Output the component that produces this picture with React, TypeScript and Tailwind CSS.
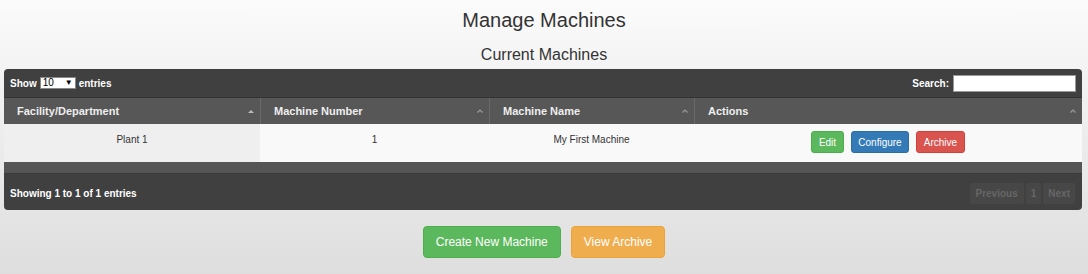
// Manage Machines page: datatable with actions + footer buttons

const FONT = { fontFamily: '"Liberation Sans", Arial, sans-serif' };

type Machine = { facility: string; number: string; name: string };

const MACHINES: Machine[] = [{ facility: "Plant 1", number: "1", name: "My First Machine" }];

function SortIcon({ active = false }: { active?: boolean }) {
  return active ? (
    <svg width="6" height="4" viewBox="0 0 6 4" className="shrink-0">
      <path d="M0 4 L3 1 L6 4 Z" fill="#bbbbbb" />
    </svg>
  ) : (
    <svg width="6" height="4" viewBox="0 0 6 4" className="shrink-0">
      <path d="M0.5 3.5 L3 1 L5.5 3.5" fill="none" stroke="#9a9a9a" strokeWidth="1.2" />
    </svg>
  );
}

function HeaderCell({ label, active, className }: { label: string; active?: boolean; className: string }) {
  return (
    <div className={`flex items-center justify-between pl-[13px] pr-[6px] ${className}`}>
      <span className="text-[11px] font-bold text-[#eeeeee]">{label}</span>
      <SortIcon active={active} />
    </div>
  );
}

export default function App() {
  return (
    <div
      className="w-[1088px] h-[274px] bg-gradient-to-b from-[#fbfbfb] to-[#dedede] flex flex-col items-center text-[#333]"
      style={FONT}
    >
      <h1 className="mt-[7px] text-[20px] leading-[26px] text-[#333]">Manage Machines</h1>
      <h2 className="mt-[12px] text-[16px] leading-[20px] text-[#333]">Current Machines</h2>

      {/* Table panel */}
      <div className="mt-[4px] w-[1078px] self-start ml-[4px] rounded-[4px] bg-[#404040] overflow-hidden">
        {/* Top controls */}
        <div className="h-[29px] flex items-center justify-between pl-[6px] pr-[6px] border-b border-[#333]">
          <div className="flex items-center gap-[3px] text-[10px] font-bold text-white">
            <span>Show</span>
            <div className="w-[36px] h-[12px] bg-white border border-[#888] flex items-center justify-between px-[2px] text-black font-normal text-[10px] leading-none">
              <span>10</span>
              <span className="text-[8px]">▼</span>
            </div>
            <span>entries</span>
          </div>
          <div className="flex items-center gap-[4px] text-[10px] font-bold text-white">
            <span>Search:</span>
            <div className="w-[123px] h-[17px] bg-white border border-[#999]" />
          </div>
        </div>

        {/* Header */}
        <div className="flex h-[26px] bg-[#575757]">
          <HeaderCell label="Facility/Department" active className="w-[256px]" />
          <HeaderCell label="Machine Number" className="w-[229px] border-l border-[#6a6a6a]" />
          <HeaderCell label="Machine Name" className="w-[205px] border-l border-[#6a6a6a]" />
          <HeaderCell label="Actions" className="flex-1 border-l border-[#6a6a6a]" />
        </div>

        {/* Rows */}
        {MACHINES.map((m) => (
          <div key={m.number} className="flex h-[38px] text-[10px] text-[#333]">
            <div className="w-[256px] bg-[#efefef] flex items-center justify-center pb-[8px]">{m.facility}</div>
            <div className="w-[229px] bg-[#f9f9f9] flex items-center justify-center pb-[8px]">{m.number}</div>
            <div className="w-[205px] bg-[#f9f9f9] flex items-center justify-center pb-[8px]">{m.name}</div>
            <div className="flex-1 bg-[#f9f9f9] flex items-center justify-center gap-[7px] pb-[2px]">
              <button className="h-[22px] w-[33px] rounded-[3px] bg-[#5cb85c] border border-[#4cae4c] text-white text-[10px]">
                Edit
              </button>
              <button className="h-[22px] w-[58px] rounded-[3px] bg-[#337ab7] border border-[#2e6da4] text-white text-[10px]">
                Configure
              </button>
              <button className="h-[22px] w-[49px] rounded-[3px] bg-[#d9534f] border border-[#d43f3a] text-white text-[10px]">
                Archive
              </button>
            </div>
          </div>
        ))}

        <div className="h-[12px] bg-[#555] border-b border-[#3a3a3a]" />

        {/* Footer */}
        <div className="h-[36px] flex items-center justify-between pl-[6px] pr-[7px] pt-[2px]">
          <span className="text-[10px] font-bold text-white">Showing 1 to 1 of 1 entries</span>
          <div className="flex items-center gap-[2px] text-[10px] font-bold text-[#666]">
            <span className="h-[21px] px-[6px] flex items-center bg-[#474747] rounded-[2px]">Previous</span>
            <span className="h-[21px] px-[5px] flex items-center bg-[#474747] rounded-[2px]">1</span>
            <span className="h-[21px] px-[5px] flex items-center bg-[#474747] rounded-[2px]">Next</span>
          </div>
        </div>
      </div>

      {/* Bottom actions */}
      <div className="mt-[16px] flex gap-[10px]">
        <button className="h-[32px] px-[12px] rounded-[4px] bg-[#5cb85c] border border-[#4cae4c] text-white text-[12px]">
          Create New Machine
        </button>
        <button className="h-[32px] px-[12px] rounded-[4px] bg-[#f0ad4e] border border-[#eea236] text-white text-[12px]">
          View Archive
        </button>
      </div>
    </div>
  );
}
